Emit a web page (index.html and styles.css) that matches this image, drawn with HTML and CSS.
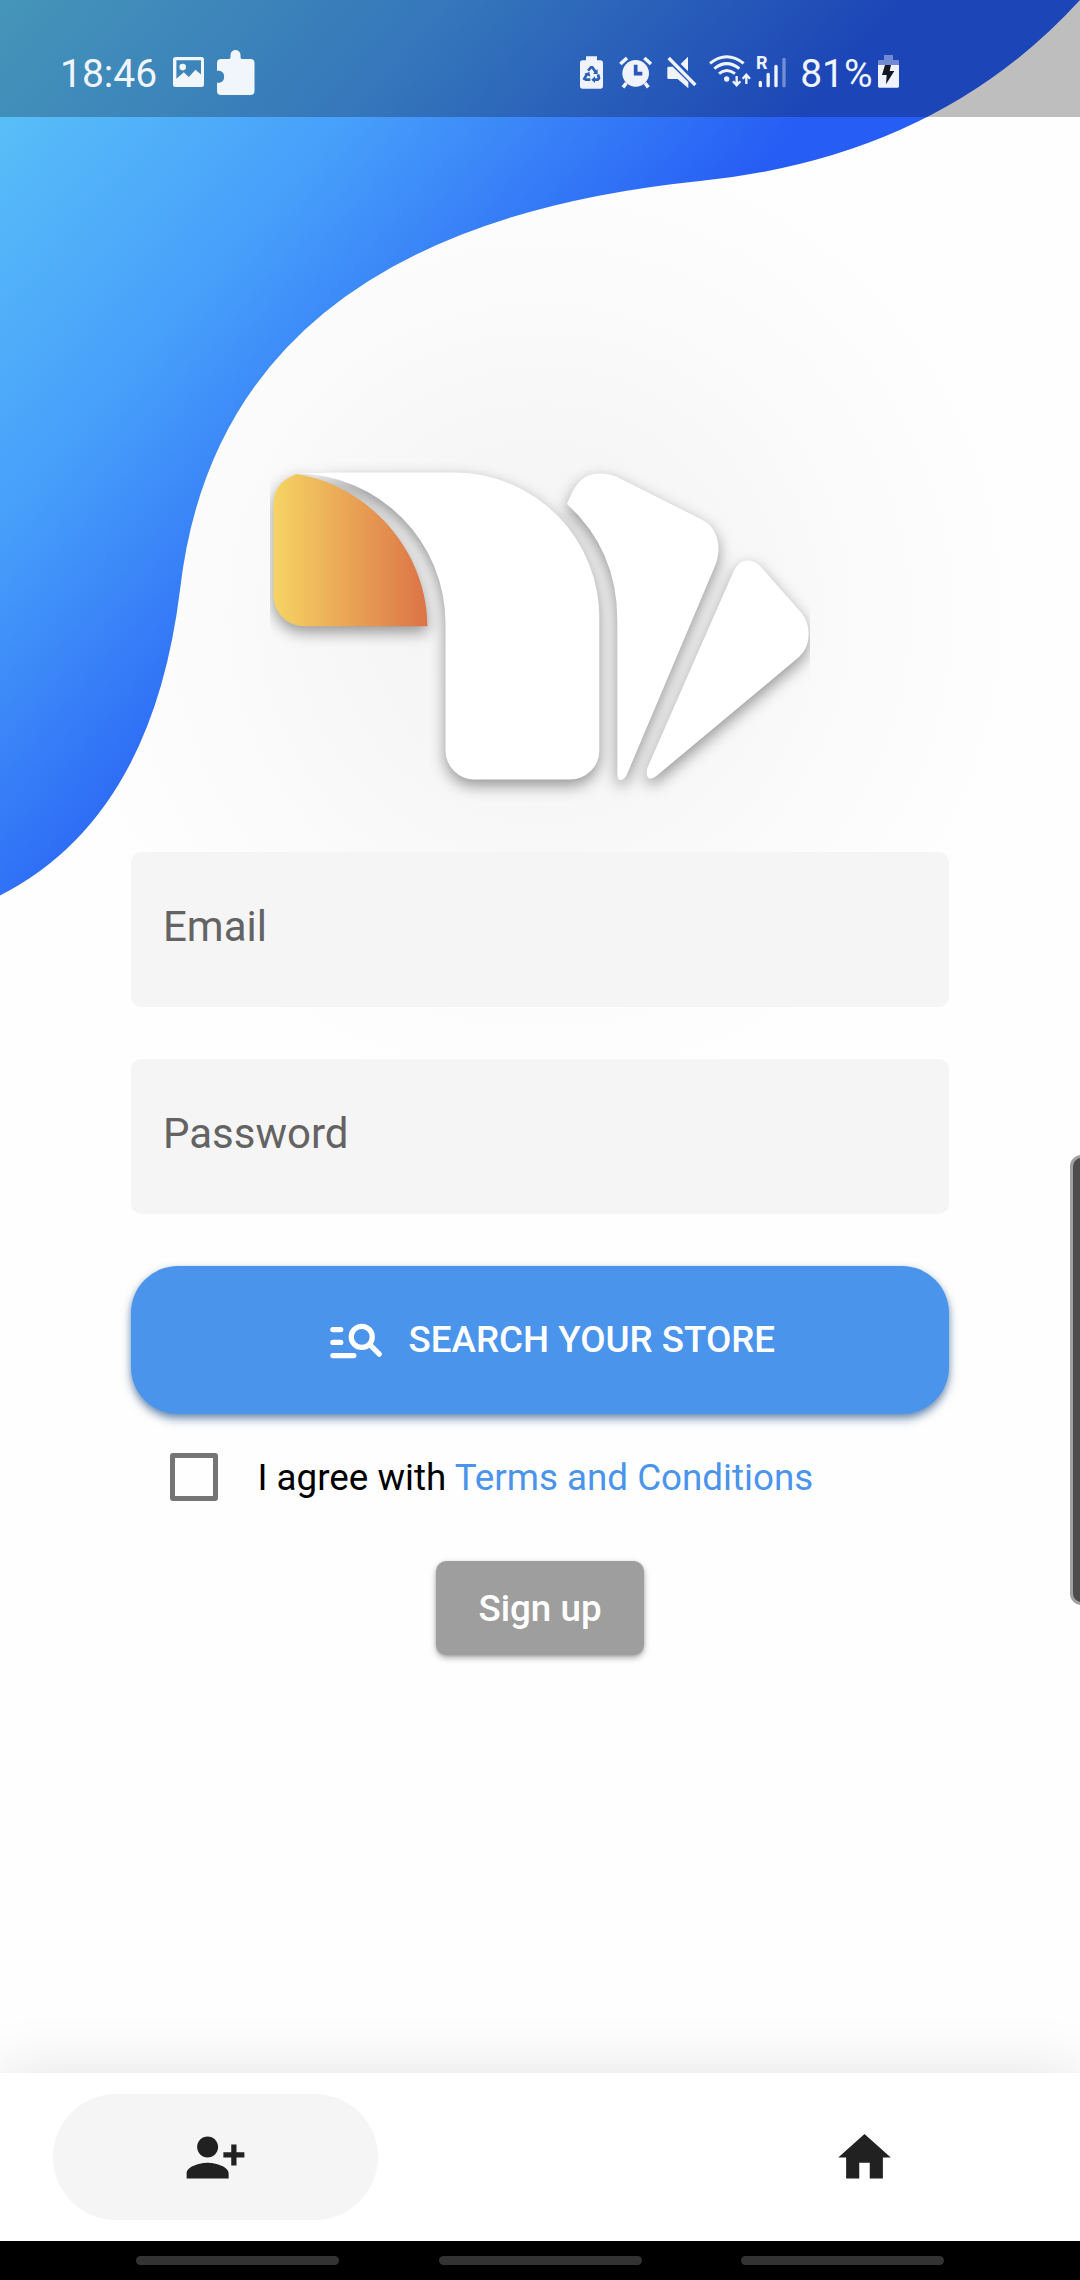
FILE: index.html
```html
<!DOCTYPE html>
<html lang="en">
<head>
<meta charset="utf-8">
<title>Sign up</title>
<link rel="stylesheet" href="styles.css">
</head>
<body>
<div class="screen">
  <div class="glow"></div>
  <svg class="wave" width="1080" height="900" viewBox="0 0 1080 900">
    <defs>
      <linearGradient id="sky" gradientUnits="userSpaceOnUse" x1="0" y1="0" x2="524" y2="447">
        <stop offset="0" stop-color="#5dc7f7"/>
        <stop offset="0.5" stop-color="#479ffa"/>
        <stop offset="1" stop-color="#265df4"/>
      </linearGradient>
    </defs>
    <path fill="url(#sky)" d="M0 0V895.500Q152 818 180 590Q221 230 700 181Q937 157 1080 0Z"/>
  </svg>

  <header class="status">
    <span class="clock">18:46</span>
    <svg class="s-image" width="31" height="30" viewBox="0 0 31 30">
      <path fill="#f0f6fb" fill-rule="evenodd" d="M2.500 0h26a2.500 2.500 0 0 1 2.500 2.500v25a2.500 2.500 0 0 1-2.500 2.500h-26A2.500 2.500 0 0 1 0 27.500v-25A2.500 2.500 0 0 1 2.500 0zM3.400 3.300v18.500l7.400-6.500 5 4.800 6.700-7.400 5.500 4.800V3.300zM9.700 6.800a3.300 3.300 0 1 1 0 6.600 3.300 3.300 0 0 1 0-6.600z"/>
    </svg>
    <svg class="s-puzzle" width="38" height="45" viewBox="0 0 38 45">
      <path fill="#f0f6fb" d="M4 9h8q1.500 0 1.500-2V5a5 5 0 0 1 10 0v2q0 2 1.500 2h8.500a4 4 0 0 1 4 4v28a4 4 0 0 1-4 4H4a4 4 0 0 1-4-4v-8.200h2.500a6.200 6.200 0 0 0 0-12H0V13a4 4 0 0 1 4-4z"/>
    </svg>
    <div class="indicators">
      <svg width="41.330" height="60" viewBox="0 0 124 180">
        <path fill="#f0f3fc" d="M48 34h33v12h10q8 0 8 8v70q0 7-8 7H38q-8 0-8-7V54q0-8 8-8h10z"/>
        <g fill="none" stroke="#2a60b6" stroke-width="8">
          <path d="M54 77l9-10h4l10 14"/><path d="M84 88l3 12-4 4H70"/><path d="M61 104H48l-5-3 8-14"/>
        </g>
        <path fill="#2a60b6" d="M83 72v15H69zM75 94v20l-11-10zM43 86l15-5 3 14z"/>
      </svg>
      <svg width="48" height="60" viewBox="124 0 144 180">
        <circle cx="198" cy="85" r="40" fill="#f0f3fc"/>
        <g stroke="#f0f3fc" stroke-width="11"><path d="M152 57l20-18M224 39l20 18M170 114l-10 13M226 114l10 13"/></g>
        <path fill="none" stroke="#2659b8" stroke-width="11" d="M198 59v27h20"/>
      </svg>
      <svg width="43.330" height="60" viewBox="268 0 130 180">
        <path fill="#f0f3fc" d="M333 57l22-22v44zM297 65h12l47 46v19l-32-28h-27q-4 0-4-4V69q0-4 4-4z"/>
        <path stroke="#2456b9" stroke-width="6" d="M306 36l76 75"/>
        <path stroke="#f0f3fc" stroke-width="10" d="M297 39l80 81"/>
      </svg>
      <svg width="50.670" height="60" viewBox="398 0 152 180">
        <g fill="none" stroke="#f0f3fc" stroke-width="9">
          <path d="M419 55q50-40 101 0M432 71q37-30 75 0M446 86q23-19 48 0"/>
          <path stroke-width="7" d="M499 93v27M488 109l11 12 11-12M528 117V90M517 101l11-12 11 12"/>
        </g>
        <circle cx="469" cy="102" r="8" fill="#f0f3fc"/>
      </svg>
      <svg width="43.330" height="60" viewBox="550 0 130 180">
        <text class="roaming" x="559" y="72">R</text>
        <g stroke="#f0f3fc" stroke-width="10" stroke-linecap="round">
          <path d="M572 112v10M595.500 88v34M619 64v58"/><path stroke-opacity="0.400" d="M643 43v79"/>
        </g>
      </svg>
      <span class="percent">81%</span>
      <svg width="29.330" height="60" viewBox="912 0 88 180">
        <path fill="#f0f3fc" fill-opacity="0.400" d="M942 30h27v15h15q3 0 3 3v12h-63V48q0-3 3-3h15z"/>
        <path fill="#f0f3fc" d="M924 60h63v64q0 4-4 4h-55q-4 0-4-4z"/>
        <path fill="#141824" d="M945 60h18l-4 18h14l-25 40 2-28h-14z"/>
      </svg>
    </div>
  </header>

  <main class="content">
    <svg class="logo" width="540" height="360" viewBox="270 450 540 360">
      <defs>
        <linearGradient id="beak" x1="0" x2="1" y1="0" y2="0">
          <stop offset="0" stop-color="#f6d463"/>
          <stop offset="1" stop-color="#dc7347"/>
        </linearGradient>
        <filter id="lift" filterUnits="userSpaceOnUse" x="260" y="440" width="560" height="380" color-interpolation-filters="sRGB">
          <feDropShadow dx="0" dy="6" stdDeviation="7.500" flood-color="#000" flood-opacity="0.400"/>
        </filter>
      </defs>
      <g filter="url(#lift)" fill="#fff">
        <path fill="url(#beak)" d="M296.700 474C370 486 427.500 552 427.500 626.300H304A30.500 30.500 0 0 1 273.500 596V505Q273.500 482 296.700 474Z"/>
        <path d="M297 473.500Q330 472.500 340 472.500H455A145 145 0 0 1 599.300 620V751A29 29 0 0 1 570.500 779.500H474A29 29 0 0 1 445.500 751V623A150 150 0 0 0 297 473.500Z"/>
        <path d="M567 504C573 490 579 473.500 600 473.500Q609 473.500 617 477L701.700 519.500Q718 528 718.500 549Q718.500 557 715 566L627.500 773Q624.500 780 621 780Q617.300 780 617.300 774V620Q617.300 550 567 504Z"/>
        <path d="M733.500 571.500Q738.500 560.500 747.500 560.500Q755 560.500 761 567L801.500 613Q808.700 622 808.700 634Q808.700 648 799 657L657 775.500Q646.700 783 646.700 772Q646.700 768 649.500 763Z"/>
      </g>
    </svg>

    <form class="form">
      <div class="field">Email</div>
      <div class="field">Password</div>
      <div class="search">
        <svg width="63" height="63" viewBox="0 0 24 24" fill="none" stroke="#fff" stroke-width="2" stroke-linecap="round">
          <path d="M3 8.200h3M3 13.100h3M3 18.100h8M17 13.900l3.700 3.700"/><circle cx="14" cy="11" r="4"/>
        </svg>
        <span>SEARCH YOUR STORE</span>
      </div>
      <div class="terms">
        <span class="checkbox"></span>
        <span class="agree">I agree with <a class="link">Terms and Conditions</a></span>
      </div>
      <div class="signup">Sign up</div>
    </form>
  </main>

  <nav class="tabs">
    <div class="tab active">
      <svg width="63" height="63" viewBox="0 0 24 24"><path fill="#212121" d="M13 8c0-2.210-1.790-4-4-4S5 5.790 5 8s1.790 4 4 4 4-1.790 4-4zm2 2v2h3v3h2v-3h3v-2h-3V7h-2v3h-3zM1 18v2h16v-2c0-2.660-5.330-4-8-4s-8 1.340-8 4z"/></svg>
    </div>
    <div class="tab">
      <svg width="63" height="63" viewBox="0 0 24 24"><path fill="#212121" d="M10 20v-6h4v6h5v-8h3L12 3 2 12h3v8z"/></svg>
    </div>
  </nav>
  <div class="gestures"><i></i><i></i><i></i></div>
  <div class="edge-handle"></div>
</div>
</body>
</html>
```
FILE: styles.css
```css
* { box-sizing: border-box; }
body {
  margin: 0;
  background: #fff;
  font-family: Roboto, "Liberation Sans", sans-serif;
}
.screen {
  position: relative;
  display: flex;
  flex-direction: column;
  width: 1080px;
  height: 2280px;
  overflow: hidden;
  background: #fefefe;
}
svg { display: block; flex: none; }

/* backdrop */
.wave { position: absolute; left: 0; top: 0; }
.glow {
  position: absolute;
  left: 40px;
  top: 114px;
  width: 1000px;
  height: 1000px;
  background: radial-gradient(circle closest-side, #f4f4f4 0, #f6f6f6 30%, #f9f9f9 55%, #fcfcfc 75%, #fefefe 97%);
}

/* status bar */
.status {
  position: relative;
  display: flex;
  height: 117px;
  background: rgba(0, 0, 0, 0.25);
  color: #f0f5fb;
  font-size: 39px;
}
.clock { width: 173px; padding: 51px 0 0 60px; line-height: 46px; }
.s-image { margin-top: 57px; }
.s-puzzle { margin: 50px 0 0 13px; }
.indicators { display: flex; margin: 45px 0 0 315px; }
.percent { width: 77.330px; padding: 6px 0 0 3.500px; line-height: 46px; }
.roaming { fill: #f0f3fc; font: 700 54px Roboto, sans-serif; }

/* form */
.content {
  position: relative;
  flex: 1;
  padding-top: 333px;
}
.logo { margin: 0 auto; }
.form {
  display: flex;
  flex-direction: column;
  align-items: center;
  width: 818px;
  margin: 42px auto 0;
}
.field {
  width: 100%;
  height: 155px;
  margin-bottom: 52px;
  padding: 50px 32px 0;
  border-radius: 10.500px;
  background: #f5f5f5;
  color: #636363;
  font-size: 42px;
  line-height: 50px;
}
.search {
  display: flex;
  align-items: center;
  gap: 21px;
  width: 100%;
  height: 147.500px;
  padding-left: 193.500px;
  border-radius: 47px;
  background: #4a94ec;
  box-shadow: 0 5px 10px rgba(25, 75, 130, 0.550), 0 2px 5px rgba(25, 75, 130, 0.200);
  color: #fff;
  font-size: 36.750px;
  font-weight: 500;
}
.terms {
  display: flex;
  align-items: center;
  gap: 39.500px;
  width: 100%;
  height: 48px;
  margin-top: 39px;
  padding-left: 39px;
  color: #000;
  font-size: 36.750px;
}
.checkbox {
  width: 48px;
  height: 48px;
  border: 5.250px solid #757575;
  border-radius: 3px;
}
.agree { padding-top: 2px; }
.link { color: #4a94ec; }
.signup {
  width: 208px;
  height: 94.500px;
  margin-top: 60px;
  padding-top: 1px;
  border-radius: 10.500px;
  background: #9e9e9e;
  box-shadow: 0 3px 6px rgba(0, 0, 0, 0.300), 0 1px 3px rgba(0, 0, 0, 0.150);
  color: #fff;
  font-size: 36.750px;
  font-weight: 500;
  line-height: 94.500px;
  text-align: center;
}

/* bottom navigation */
.tabs {
  position: relative;
  display: flex;
  justify-content: space-between;
  height: 168px;
  padding: 21px 52.500px;
  background: #fff;
  box-shadow: 0 0 64px rgba(0, 0, 0, 0.110);
}
.tab {
  display: flex;
  align-items: center;
  justify-content: center;
  width: 325.500px;
  height: 126px;
  border-radius: 63px;
}
.active { background: #f5f5f5; }
.gestures {
  position: relative;
  display: flex;
  justify-content: center;
  align-items: center;
  gap: 99.500px;
  height: 39px;
  background: #000;
}
.gestures i { width: 203px; height: 9px; border-radius: 5px; background: #333; }

.edge-handle {
  position: absolute;
  right: -13px;
  top: 1155px;
  width: 23px;
  height: 450px;
  border: 3px solid #a0a0a0;
  border-radius: 12px;
  background: #4c4c4c;
}
```
